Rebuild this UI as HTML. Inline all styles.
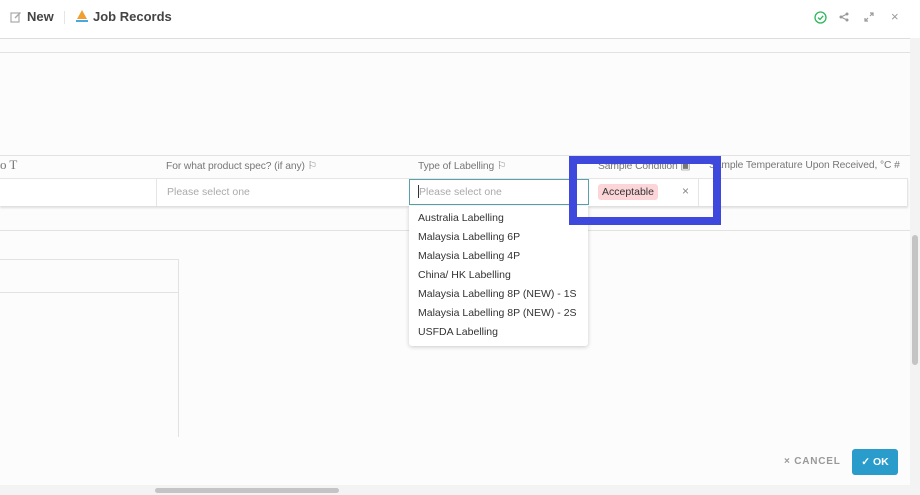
<!DOCTYPE html>
<html><head><style>
*{box-sizing:border-box;margin:0;padding:0}
body{width:920px;height:495px;background:#fcfcfc;font-family:"Liberation Sans",sans-serif;position:relative;overflow:hidden;color:#333}
.a{position:absolute}
.hl{position:absolute;height:1px;background:#e2e2e2}
.th{font-size:10.3px;color:#777;top:160px;letter-spacing:-0.1px}
.dd div{height:19px;line-height:19px;font-size:10.5px;color:#333;padding-left:9px}
</style></head><body>
<div class="a" style="left:0;top:0;width:920px;height:38px;background:#fff"></div>
<svg class="a" style="left:10px;top:11px" width="12" height="12" viewBox="0 0 12 12"><rect x="1" y="2" width="8" height="9" fill="none" stroke="#aaa" stroke-width="1.2"/><path d="M5 7 L10.5 1.5" stroke="#aaa" stroke-width="1.4"/></svg>
<div class="a" style="left:27px;top:9px;font-size:13px;font-weight:bold;color:#444">New</div>
<div class="a" style="left:64px;top:11px;width:1px;height:13px;background:#e5e5e5"></div>
<svg class="a" style="left:75px;top:9px" width="14" height="15" viewBox="0 0 14 15"><path d="M7 1 L12 10 H2 Z" fill="#f0a030"/><rect x="1" y="11" width="12" height="2" fill="#4aa8e0"/></svg>
<div class="a" style="left:93px;top:9px;font-size:13px;font-weight:bold;color:#444">Job Records</div>
<svg class="a" style="left:814px;top:11px" width="13" height="13" viewBox="0 0 13 13"><circle cx="6.5" cy="6.5" r="5.5" fill="none" stroke="#2eb85c" stroke-width="1.3"/><path d="M4 6.6 L6 8.4 L9.2 4.8" fill="none" stroke="#2eb85c" stroke-width="1.3"/></svg>
<svg class="a" style="left:839px;top:12px" width="10" height="10" viewBox="0 0 10 10"><circle cx="2" cy="5" r="1.5" fill="#999"/><circle cx="8" cy="2" r="1.5" fill="#999"/><circle cx="8" cy="8" r="1.5" fill="#999"/><path d="M2 5 L8 2 M2 5 L8 8" stroke="#999"/></svg>
<svg class="a" style="left:864px;top:12px" width="10" height="10" viewBox="0 0 10 10"><path d="M1 9 L4 6 M9 1 L6 4 M1 6 V9 H4 M6 1 H9 V4" fill="none" stroke="#999" stroke-width="1.2"/></svg>
<div class="a" style="left:891px;top:9px;font-size:13px;color:#999">×</div>
<div class="hl" style="left:0;top:38px;width:920px;background:#ddd"></div>
<div class="hl" style="left:0;top:52px;width:910px"></div>
<div class="hl" style="left:0;top:155px;width:910px"></div>
<div class="a th" style="left:0;font-family:'Liberation Serif',serif;font-size:13px;top:157px;color:#777">o T</div>
<div class="a th" style="left:166px">For what product spec? (if any) ⚐</div>
<div class="a th" style="left:418px">Type of Labelling ⚐</div>
<div class="a th" style="left:598px">Sample Condition ▣</div>
<div class="a th" style="left:709px">Sample Temperature Upon Received, °C #</div>
<div class="a" style="left:0;top:178px;width:908px;height:28px;background:#fff;border-top:1px solid #e5e5e5;border-right:1px solid #e5e5e5;box-shadow:0 2px 2px rgba(0,0,0,.12)"></div>
<div class="a" style="left:156px;top:179px;width:1px;height:27px;background:#e5e5e5"></div>
<div class="a" style="left:698px;top:179px;width:1px;height:27px;background:#e5e5e5"></div>
<div class="a" style="left:167px;top:186px;font-size:10.5px;color:#aaa">Please select one</div>
<div class="a" style="left:409px;top:179px;width:180px;height:26px;border:1px solid #5aa0ad;background:#fff"></div>
<div class="a" style="left:418px;top:185px;width:1px;height:13px;background:#333"></div>
<div class="a" style="left:419px;top:186px;font-size:10.5px;color:#aaa">Please select one</div>
<div class="a" style="left:598px;top:184px;height:16px;line-height:16px;padding:0 4px;background:#fbd5d8;border-radius:3px;font-size:10.5px;color:#333">Acceptable</div>
<div class="a" style="left:682px;top:184px;font-size:12px;color:#888">×</div>
<div class="hl" style="left:0;top:230px;width:910px"></div>
<div class="a dd" style="left:409px;top:206px;width:179px;height:140px;background:#fff;box-shadow:0 1px 4px rgba(0,0,0,.2);border-radius:0 0 3px 3px;padding-top:3px">
<div>Australia Labelling</div><div>Malaysia Labelling 6P</div><div>Malaysia Labelling 4P</div><div>China/ HK Labelling</div><div>Malaysia Labelling 8P (NEW) - 1S</div><div>Malaysia Labelling 8P (NEW) - 2S</div><div>USFDA Labelling</div></div>
<div class="a" style="left:569px;top:156px;width:152px;height:69px;border:8px solid #3f48dc"></div>
<div class="a" style="left:0;top:259px;width:179px;height:178px;border-top:1px solid #e2e2e2;border-right:1px solid #e2e2e2"></div>
<div class="hl" style="left:0;top:292px;width:178px"></div>
<div class="a" style="left:784px;top:456px;font-size:10px;font-weight:bold;color:#999;letter-spacing:.8px">× CANCEL</div>
<div class="a" style="left:852px;top:449px;width:46px;height:26px;background:#2a9ccc;border-radius:3px;color:#fff;font-size:10.5px;font-weight:bold;line-height:26px;text-align:center">✓ OK</div>
<div class="a" style="left:910px;top:38px;width:10px;height:457px;background:#f3f3f3"></div>
<div class="a" style="left:912px;top:235px;width:6px;height:130px;background:#c4c4c4;border-radius:3px"></div>
<div class="a" style="left:0;top:485px;width:910px;height:10px;background:#f3f3f3"></div>
<div class="a" style="left:155px;top:488px;width:184px;height:5px;background:#c4c4c4;border-radius:3px"></div>
</body></html>
